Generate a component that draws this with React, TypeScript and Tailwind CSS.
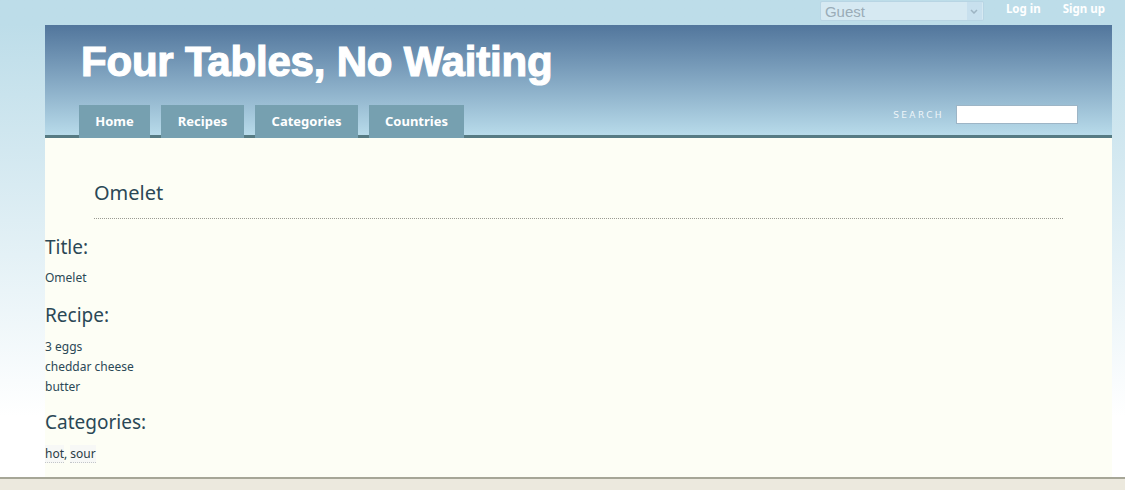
import React from "react";

const tabs = [
  { label: "Home", w: "w-[71px]" },
  { label: "Recipes", w: "w-[83px]" },
  { label: "Categories", w: "w-[103px]" },
  { label: "Countries", w: "w-[95px]" },
];

const sans = "font-['Noto_Sans','DejaVu_Sans',sans-serif]";

const App = () => {
  return (
    <div
      className={`h-[490px] w-full flex flex-col overflow-hidden bg-linear-to-b from-[#bddde9] from-5% to-white to-85% ${sans}`}
    >
      {/* top bar */}
      <div className="h-[25px] flex items-start justify-end pr-[20px]">
        <div className="mt-[1px] w-[164px] h-[20px] flex items-center bg-[#d6e9f2] border border-[#b8d5e4] rounded-[2px]">
          <span className="flex-1 pl-[4px] text-[15px] leading-none text-[#9aacb7] font-['Liberation_Sans',sans-serif]">
            Guest
          </span>
          <span className="w-[15px] h-[18px] mr-[1px] flex items-center justify-center bg-[#c8e0ee]">
            <svg width="8" height="5" viewBox="0 0 8 5">
              <path d="M1 1l3 3 3-3" fill="none" stroke="#9db4c3" strokeWidth="1.5" />
            </svg>
          </span>
        </div>
        <a className="ml-[22px] mt-[3px] text-[11.5px] font-bold text-white leading-none">Log in</a>
        <a className="ml-[22px] mt-[3px] text-[11.5px] font-bold text-white leading-none">Sign up</a>
      </div>

      {/* main box */}
      <div className="ml-[45px] w-[1067px] flex-1 flex flex-col">
        <div className="h-[113px] flex flex-col bg-linear-to-b from-[#52769c] to-[#b8dbea] border-b-[3px] border-[#567b83]">
          <h1 className="pl-[36px] pt-[16px] text-[42px] leading-none font-bold tracking-[-0.2px] text-white [-webkit-text-stroke:1.2px_white] font-['Liberation_Sans',Arial,sans-serif]">
            Four Tables, No Waiting
          </h1>
          <div className="mt-auto flex items-end justify-between pl-[34px] pr-[34px] -mb-[3px] relative">
            <nav className="flex gap-[11px]">
              {tabs.map((t) => (
                <a
                  key={t.label}
                  className={`${t.w} h-[33px] flex items-center justify-center bg-[#76a0b0] text-white text-[13px] font-bold`}
                >
                  {t.label}
                </a>
              ))}
            </nav>
            <div className="flex items-center gap-[12px] mb-[14px]">
              <span className="mt-[3px] text-[9px] tracking-[2.4px] text-[#eef5f9] font-['DejaVu_Sans',sans-serif]">
                SEARCH
              </span>
              <input className="w-[122px] h-[19px] bg-white border border-[#9db5c6] outline-none" />
            </div>
          </div>
        </div>

        <div className="flex-1 bg-[#fdfef5] pt-[43px] text-[#2b4856]">
          <div className="mx-[49px] pb-[13px] border-b border-dotted border-[#9a9a92]">
            <h2 className="text-[20px] leading-[24px]">Omelet</h2>
          </div>

          <h3 className="mt-[16px] text-[19px] leading-[24px]">Title:</h3>
          <p className="mt-[9px] text-[12px] leading-[20px]">Omelet</p>

          <h3 className="mt-[15px] text-[19px] leading-[24px]">Recipe:</h3>
          <div className="mt-[10px] text-[12px] leading-[20px]">
            <p>3 eggs</p>
            <p>cheddar cheese</p>
            <p>butter</p>
          </div>

          <h3 className="mt-[13px] text-[19px] leading-[24px]">Categories:</h3>
          <p className="mt-[10px] text-[12px] leading-[20px] text-[#2a3b44]">
            <span className="bg-[#f7f8f6] border-b border-dotted border-[#c3c6c9]">hot</span>,{" "}
            <span className="bg-[#f7f8f6] border-b border-dotted border-[#c3c6c9]">sour</span>
          </p>
        </div>
      </div>

      <div className="h-[13px] border-t-2 border-[#a6a697] bg-[#ece9de]" />
    </div>
  );
};

export default App;
